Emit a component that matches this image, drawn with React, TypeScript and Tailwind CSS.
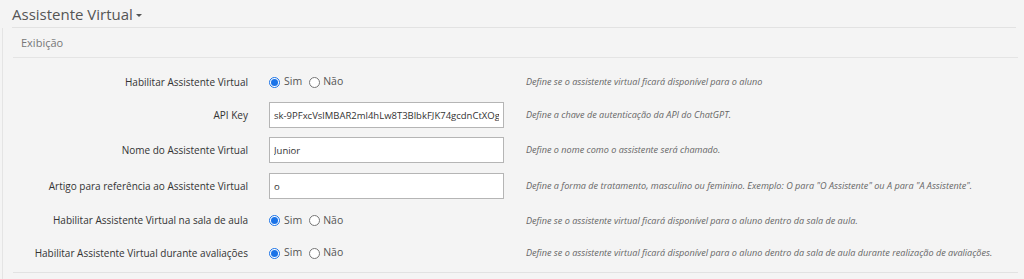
import React from "react";

type Row =
  | { kind: "radio"; label: string; help: string; h: string }
  | { kind: "input"; label: string; value: string; help: string; h: string };

const rows: Row[] = [
  {
    kind: "radio",
    label: "Habilitar Assistente Virtual",
    help: "Define se o assistente virtual ficará disponível para o aluno",
    h: "h-[32px]",
  },
  {
    kind: "input",
    label: "API Key",
    value: "sk-9PFxcVslMBAR2ml4hLw8T3BlbkFJK74gcdnCtXOg",
    help: "Define a chave de autenticação da API do ChatGPT.",
    h: "h-[34px]",
  },
  {
    kind: "input",
    label: "Nome do Assistente Virtual",
    value: "Junior",
    help: "Define o nome como o assistente será chamado.",
    h: "h-[36px]",
  },
  {
    kind: "input",
    label: "Artigo para referência ao Assistente Virtual",
    value: "o",
    help: 'Define a forma de tratamento, masculino ou feminino. Exemplo: O para "O Assistente" ou A para "A Assistente".',
    h: "h-[36px]",
  },
  {
    kind: "radio",
    label: "Habilitar Assistente Virtual na sala de aula",
    help: "Define se o assistente virtual ficará disponível para o aluno dentro da sala de aula.",
    h: "h-[33px]",
  },
  {
    kind: "radio",
    label: "Habilitar Assistente Virtual durante avaliações",
    help: "Define se o assistente virtual ficará disponível para o aluno dentro da sala de aula durante realização de avaliações.",
    h: "h-[32px]",
  },
];

function Radio({ checked }: { checked?: boolean }) {
  return checked ? (
    <span className="flex size-[11px] shrink-0 items-center justify-center rounded-full border border-[#1a73e8] bg-white">
      <span className="block size-[7px] rounded-full bg-[#1a73e8]" />
    </span>
  ) : (
    <span className="block size-[11px] shrink-0 rounded-full border border-[#767676] bg-white" />
  );
}

function YesNo() {
  return (
    <div className="flex items-center text-[10.5px] text-[#555]">
      <Radio checked />
      <span className="ml-[4px]">Sim</span>
      <span className="ml-[7px] block">
        <Radio />
      </span>
      <span className="ml-[3px]">Não</span>
    </div>
  );
}

export default function App() {
  return (
    <div className="h-[279px] w-[1024px] overflow-hidden bg-[#f4f4f4] font-['Open_Sans',sans-serif]">
      <div className="flex h-[27px] items-center pl-[12px] pt-[1px]">
        <span className="text-[15px] leading-5 text-[#555]">Assistente Virtual</span>
        <span className="ml-[3px] mt-[3px] border-x-[3px] border-t-[3px] border-x-transparent border-t-[#555]" />
      </div>
      <div className="ml-[12px] mr-[8px] border-b border-[#e2e2e2]" />
      <div className="ml-[2px] border-l border-[#e4e4e4] pb-[10px]">
        <div className="ml-[10px] mr-[6px] flex h-[30px] items-center border-b border-[#e4e4e4] pl-[8px] pt-[2px]">
          <span className="text-[11px] text-[#777]">Exibição</span>
        </div>
        <div className="pt-[8px]">
          {rows.map((row) => (
            <div key={row.label} className={`flex items-center ${row.h}`}>
              <div className="w-[245px] shrink-0 text-right text-[10px] text-[#333]">
                {row.label}
              </div>
              <div className="ml-[21px] w-[235px] shrink-0">
                {row.kind === "radio" ? (
                  <YesNo />
                ) : (
                  <input
                    readOnly
                    value={row.value}
                    className="block h-[26px] w-[235px] border border-[#b5b5b5] bg-white px-[4px] text-[9.5px] text-[#333] outline-none"
                  />
                )}
              </div>
              <div className="ml-[22px] whitespace-nowrap text-[9.1px] italic text-[#666]">
                {row.help}
              </div>
            </div>
          ))}
        </div>
        <div className="ml-[10px] mr-[6px] mt-[3px] border-b border-[#e2e2e2]" />
      </div>
    </div>
  );
}
